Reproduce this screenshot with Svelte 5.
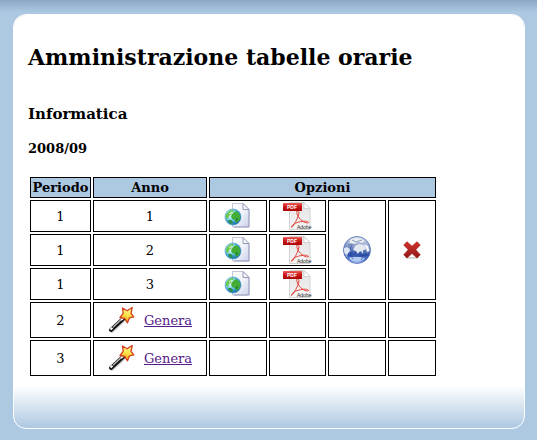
<script>
  const years = [1, 2, 3];
  const pending = [2, 3];
</script>

{#snippet pageIcon()}
  <svg width="28" height="28" viewBox="0 0 28 28" aria-hidden="true">
    <defs>
      <linearGradient id="sheet" x1="0" y1="0" x2="1" y2="1">
        <stop offset="0" stop-color="#fff" /><stop offset="0.500" stop-color="#f1f3fa" /><stop offset="1" stop-color="#c9d0e8" />
      </linearGradient>
      <radialGradient id="sea" cx="0.350" cy="0.350" r="0.700">
        <stop offset="0" stop-color="#fff" /><stop offset="0.400" stop-color="#8fdcf2" /><stop offset="0.750" stop-color="#2f94cf" /><stop offset="1" stop-color="#1763a8" />
      </radialGradient>
    </defs>
    <path d="M8.500 1.500h10.500l6 6v17.500H8.500z" fill="url(#sheet)" stroke="#c3c5d8" />
    <path d="M19 1.500v6h6z" fill="#fafbff" stroke="#9698b6" />
    <path d="M25 8v17H10" fill="none" stroke="#9a9cc0" />
    <circle cx="9" cy="15" r="8" fill="url(#sea)" stroke="#4a9fc4" stroke-width="0.600" />
    <path d="M2 13c1-3 4-5 7-5l1 1-3 2 1 1-3 2-1 3-2-1z" fill="#6cc74d" />
    <path d="M9 11l3-2 3 2 1.500 4-1.500 4-3 2-1-3-3-1-1-3z" fill="#43ad35" />
    <path d="M4 18l3 0 2 2-1 2-3-1.500z" fill="#2d8f3a" />
    <path d="M12 16l2 1-2 3z" fill="#1f7a2a" />
    <path d="M5 12l3-2" stroke="#e4ffd6" />
  </svg>
{/snippet}

{#snippet pdfIcon()}
  <svg width="32" height="28" viewBox="0 0 32 28" aria-hidden="true">
    <defs>
      <linearGradient id="band" x1="0" y1="0" x2="0" y2="1">
        <stop offset="0" stop-color="#ee625c" /><stop offset="0.400" stop-color="#d01c1c" /><stop offset="1" stop-color="#a90606" />
      </linearGradient>
      <linearGradient id="paper" x1="0" y1="0" x2="0" y2="1">
        <stop offset="0" stop-color="#e2e2e2" /><stop offset="1" stop-color="#f6f6f6" />
      </linearGradient>
    </defs>
    <path d="M7.500 .5H22l6 6v21H7.500z" fill="url(#paper)" stroke="#d3d3d3" />
    <path d="M22 .5v6h6z" fill="#fff" stroke="#c4c4c4" stroke-width="0.700" />
    <path d="M16.500 9.500c-1.500-1.500-2.500 0-1 3.500 2 4.500 6.500 8 10.500 8 2-1-2-2.500-6-1.500-5 .5-9 2.500-10.500 5-1 1.500 1 1 2.500-2 2.500-4 5-9 5-12 0-.5-.2-.8-.5-1z" fill="none" stroke="#e2433c" />
    <rect x="1" y="1" width="19" height="8" rx="0.500" fill="url(#band)" />
    <text x="5" y="7" font-family="Liberation Sans, sans-serif" font-size="5" font-weight="bold" fill="#fff">PDF</text>
    <text x="15" y="27" font-family="Liberation Sans, sans-serif" font-size="5" fill="#222">Adobe</text>
  </svg>
{/snippet}

{#snippet globeIcon()}
  <svg width="28" height="28" viewBox="0 0 28 28" aria-hidden="true">
    <defs>
      <linearGradient id="ocean" x1="0.550" y1="0" x2="0.450" y2="1">
        <stop offset="0" stop-color="#d3d9e4" /><stop offset="0.350" stop-color="#8fa2cc" /><stop offset="0.650" stop-color="#3153aa" /><stop offset="0.850" stop-color="#5578c8" /><stop offset="1" stop-color="#a9c2f0" />
      </linearGradient>
    </defs>
    <circle cx="14" cy="14" r="13.500" fill="url(#ocean)" stroke="#4f6fb8" stroke-width="0.800" />
    <path d="M7 4c4-3 11-3 14.500 1l-2 2-4-1-4 2-5-1z" fill="#e9edf2" />
    <path d="M1 12l3-1 3 2 1 2-3 2-1 4c-2-2-3.500-5-3-9z" fill="#dfe7f5" />
    <path d="M12 10l4-2 5 1 2 3-1 2-2 0 0 4-2-3-2 1-1 2-2-3-3-1z" fill="#e3e8f1" />
    <path d="M21 8l4 2 1.500 5-2.500 1-1-4z" fill="#f5f7fb" />
    <path d="M6 22c4-2 11-1 16 0-4 5-12 5-16 0z" fill="#b4cbf3" />
    <path d="M2 18.500c6 2.500 18 2.500 24-1M9 9c-3 4-2 10 1 14M19 19c1 2 0 4-1 5" fill="none" stroke="#1c3c93" opacity="0.600" />
    <path d="M5 9l4-1 2 1M9 4l4 2 6-2M22 15l3 3" fill="none" stroke="#5f77a8" opacity="0.700" />
  </svg>
{/snippet}

{#snippet deleteIcon()}
  <svg width="18" height="18" viewBox="0 0 18 18" aria-hidden="true">
    <defs>
      <linearGradient id="cross" x1="0" y1="0" x2="0" y2="1">
        <stop offset="0" stop-color="#d6332a" /><stop offset="1" stop-color="#8d1a19" />
      </linearGradient>
    </defs>
    <ellipse cx="9" cy="16.800" rx="8.500" ry="0.900" fill="#d0d0d0" />
    <path d="M4 .8L9 5.300 14 .8 17.200 4 12.700 8.800 17.200 13.700 14 17 9 12.400 4 17 .8 13.700 5.300 8.800.8 4z" fill="url(#cross)" stroke="#a51f1c" stroke-width="0.800" stroke-linejoin="round" />
  </svg>
{/snippet}

{#snippet wandIcon()}
  <svg width="28" height="28" viewBox="0 0 28 28" aria-hidden="true">
    <defs>
      <linearGradient id="star" x1="0.600" y1="0" x2="0.400" y2="1">
        <stop offset="0" stop-color="#fff9a0" /><stop offset="0.500" stop-color="#ffe348" /><stop offset="1" stop-color="#f5961c" />
      </linearGradient>
    </defs>
    <path d="M4 25L17 13" stroke="#999" stroke-width="4" stroke-linecap="round" opacity="0.400" />
    <path d="M3 24L16 12" stroke="#111" stroke-width="4" stroke-linecap="round" />
    <path d="M2.500 23.500L4.500 21.700M13 14L15.500 11.700" stroke="#fff" stroke-width="2" />
    <path d="M5 21.300L13 13.800" stroke="#c4c4c4" stroke-width="1.200" />
    <path d="M14.500 2l4.700 2.800 5-3.300-1.200 6 2.800 3.300-4.300 1-2 5-2.800-4.500-4.700-.8 3.200-4.200z" fill="url(#star)" stroke="#d2401c" stroke-width="1.300" stroke-linejoin="round" />
  </svg>
{/snippet}

<main>
  <h1>Amministrazione tabelle orarie</h1>
  <h2>Informatica</h2>
  <h3>2008/09</h3>
  <table>
    <colgroup>
      <col class="period" /><col class="year" /><col class="html" />
      <col class="pdf" /><col class="web" /><col class="remove" />
    </colgroup>
    <thead>
      <tr><th>Periodo</th><th>Anno</th><th colspan="4">Opzioni</th></tr>
    </thead>
    <tbody>
      {#each years as year, i}
        <tr class="ready">
          <td>1</td>
          <td>{year}</td>
          <td><a class="icon" href="#html" aria-label="HTML">{@render pageIcon()}</a></td>
          <td><a class="icon" href="#pdf" aria-label="PDF">{@render pdfIcon()}</a></td>
          {#if i === 0}
            <td rowspan={years.length}><a class="icon" href="#web" aria-label="Web">{@render globeIcon()}</a></td>
            <td rowspan={years.length}><button class="icon" type="button" aria-label="Elimina">{@render deleteIcon()}</button></td>
          {/if}
        </tr>
      {/each}
      {#each pending as period}
        <tr class="pending">
          <td>{period}</td>
          <td><a class="generate" href="#genera">{@render wandIcon()}<span>Genera</span></a></td>
          <td></td><td></td><td></td><td></td>
        </tr>
      {/each}
    </tbody>
  </table>
</main>

<style>
  :global(body) {
    margin: 0;
    background: linear-gradient(#8ca7c5, #adc8e1 12px) no-repeat #adc8e1;
    font: 13px/17px "DejaVu Serif", serif;
    color: #000;
  }
  :global(#app) {
    display: flow-root;
  }
  main {
    margin: 14px 12px 11px 13px;
    padding: 28px 14px 50px;
    border: 1px solid #fff;
    border-radius: 13px;
    background: linear-gradient(#fff, #acc8e1) bottom / 100% 42px no-repeat padding-box #fff;
  }
  h1 {
    margin: 0 0 33px;
    font-size: 22px;
    line-height: 28px;
  }
  h2 {
    margin: 0 0 16px;
    font-size: 15px;
    line-height: 20px;
  }
  h3 {
    margin: 0 0 17px;
    font-size: 13px;
    line-height: 18px;
  }
  table {
    border-collapse: separate;
    border-spacing: 2px;
  }
  .period { width: 61px; }
  .year { width: 114px; }
  .html, .web { width: 58px; }
  .pdf { width: 57px; }
  .remove { width: 48px; }
  th, td {
    box-sizing: border-box;
    padding: 1px;
    border: 1px solid #000;
    text-align: center;
    vertical-align: middle;
  }
  th {
    background: #adc8e1;
  }
  .ready td { height: 32px; }
  .pending td { height: 36px; }
  .icon {
    display: flex;
    justify-content: center;
    width: 100%;
    padding: 0;
    border: 0;
    background: none;
  }
  svg {
    display: block;
    flex: none;
  }
  .generate {
    display: flex;
    justify-content: center;
    align-items: center;
    gap: 8px;
    color: #551a8b;
  }
</style>
